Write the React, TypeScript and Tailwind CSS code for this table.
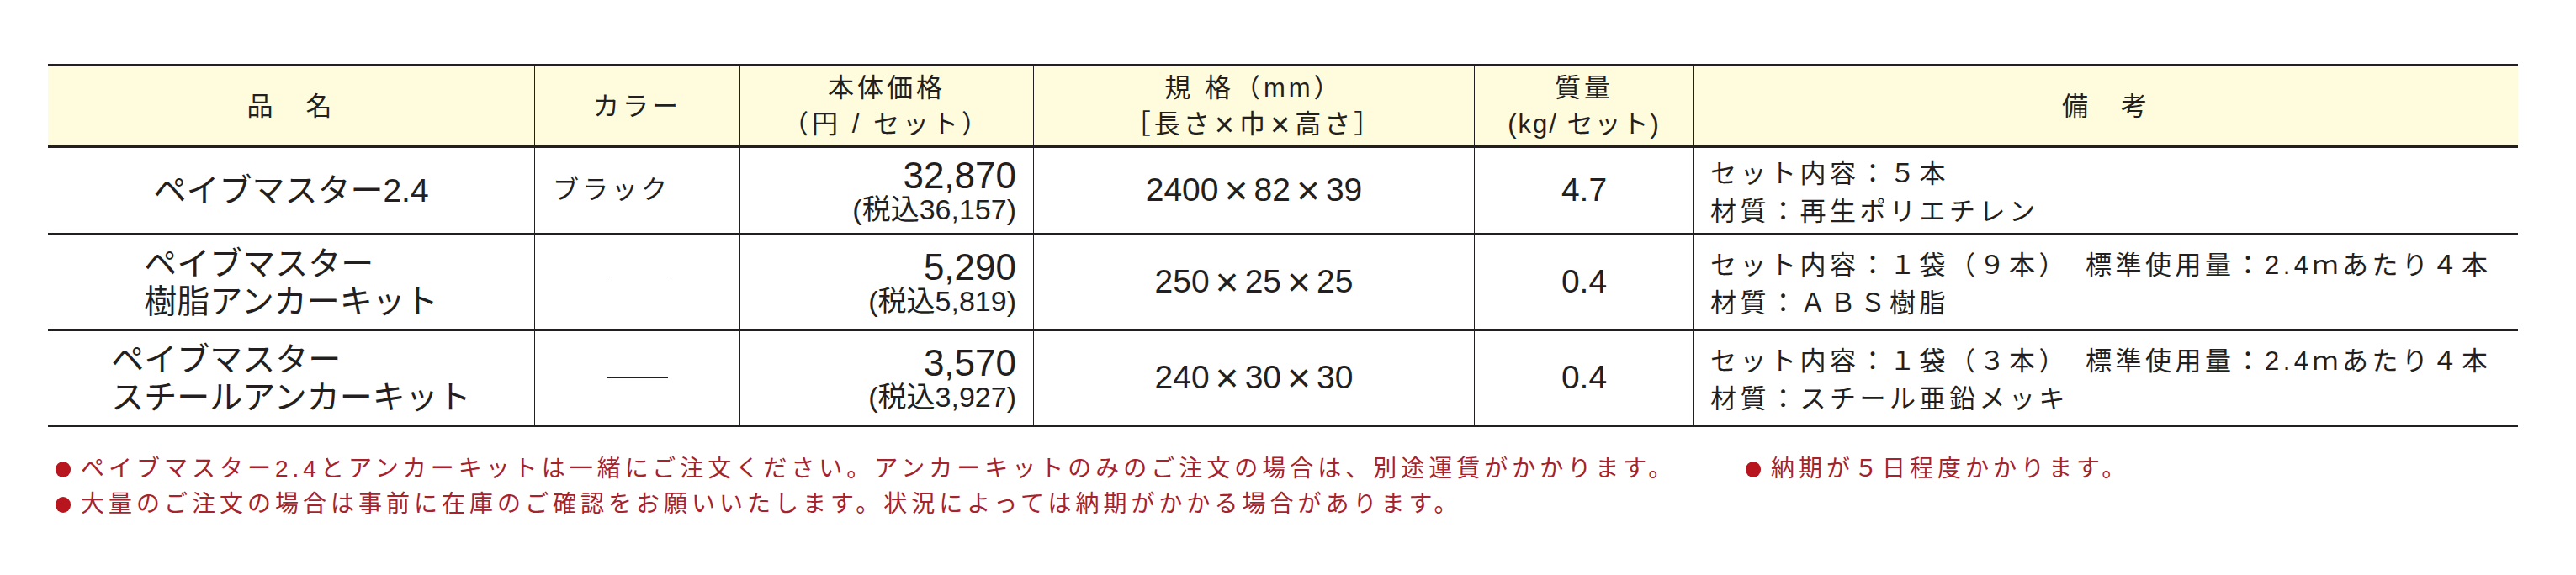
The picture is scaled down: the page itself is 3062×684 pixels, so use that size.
type Row = {
  name: string[];
  color: string | null;
  price: string;
  taxed: string;
  dims: string[];
  weight: string;
  notes: string[];
  height: string;
};

const rows: Row[] = [
  {
    name: ["ペイブマスター2.4"],
    color: "ブラック",
    price: "32,870",
    taxed: "(税込36,157)",
    dims: ["2400", "82", "39"],
    weight: "4.7",
    notes: ["セット内容：５本", "材質：再生ポリエチレン"],
    height: "h-[101px]",
  },
  {
    name: ["ペイブマスター", "樹脂アンカーキット"],
    color: null,
    price: "5,290",
    taxed: "(税込5,819)",
    dims: ["250", "25", "25"],
    weight: "0.4",
    notes: ["セット内容：１袋（９本）　標準使用量：2.4ｍあたり４本", "材質：ＡＢＳ樹脂"],
    height: "h-[111px]",
  },
  {
    name: ["ペイブマスター", "スチールアンカーキット"],
    color: null,
    price: "3,570",
    taxed: "(税込3,927)",
    dims: ["240", "30", "30"],
    weight: "0.4",
    notes: ["セット内容：１袋（３本）　標準使用量：2.4ｍあたり４本", "材質：スチール亜鉛メッキ"],
    height: "h-[111px]",
  },
];

const Bullet = () => (
  <span className="mr-[12px] inline-block h-[19px] w-[18px] shrink-0 rounded-full bg-[#b8161f]" />
);

const Dims = ({ parts }: { parts: string[] }) => (
  <span className="flex items-center">
    {parts.map((p, i) => (
      <span key={i} className="flex items-center">
        {i > 0 && <span className="mx-[7px] text-[48px] leading-none">×</span>}
        {p}
      </span>
    ))}
  </span>
);

const X = () => <span className="mx-[2px] text-[40px] leading-none">×</span>;

export default function App() {
  return (
    <div className="h-[684px] w-[3062px] bg-white pt-[76px] font-['Liberation_Sans','Noto_Sans_CJK_JP',sans-serif] text-[#231f20]">
      {/* table */}
      <div className="ml-[57px] w-[2936px] border-t-[3px] border-[#231f20]">
        {/* header */}
        <div className="flex h-[97px] border-b-[3px] border-[#231f20] bg-[#fefcdc] text-[31px] leading-[43px] tracking-[4px]">
          <div className="flex w-[579px] items-center justify-center border-r border-[#231f20]">品　名</div>
          <div className="flex w-[244px] items-center justify-center border-r border-[#231f20]">カラー</div>
          <div className="flex w-[349px] flex-col items-center justify-center border-r border-[#231f20]">
            <span>本体価格</span>
            <span>（円 / セット）</span>
          </div>
          <div className="flex w-[524px] flex-col items-center justify-center border-r border-[#231f20]">
            <span>規 格（mm）</span>
            <span className="flex items-center">
              ［長さ<X />巾<X />高さ］
            </span>
          </div>
          <div className="flex w-[261px] flex-col items-center justify-center border-r border-[#231f20]">
            <span>質量</span>
            <span className="tracking-[2px]">(kg/ セット)</span>
          </div>
          <div className="flex w-[979px] items-center justify-center">備　考</div>
        </div>

        {rows.map((r, i) => (
          <div key={i} className={`flex ${r.height} box-content border-b-[3px] border-[#231f20]`}>
            <div className="flex w-[579px] items-center justify-center border-r border-[#231f20] text-[39px] leading-[45px]">
              <div className="text-left">
                {r.name.map((n) => (
                  <div key={n}>{n}</div>
                ))}
              </div>
            </div>
            <div className="flex w-[244px] items-center border-r border-[#231f20]">
              {r.color ? (
                <span className="pl-[21px] text-[31px] tracking-[4px]">{r.color}</span>
              ) : (
                <div className="mx-auto h-px w-[73px] bg-[#231f20]" />
              )}
            </div>
            <div className="flex w-[349px] flex-col items-end justify-center border-r border-[#231f20] pr-[20px] pt-[4px]">
              <span className="text-[44px] leading-[41px]">{r.price}</span>
              <span className="text-[34px] leading-[41px]">{r.taxed}</span>
            </div>
            <div className="flex w-[524px] items-center justify-center border-r border-[#231f20] text-[39px]">
              <Dims parts={r.dims} />
            </div>
            <div className="flex w-[261px] items-center justify-center border-r border-[#231f20] text-[39px]">
              {r.weight}
            </div>
            <div className="flex w-[979px] flex-col justify-center whitespace-nowrap pl-[19px] pt-[4px] text-[31px] leading-[45px] tracking-[4.5px]">
              {r.notes.map((n) => (
                <div key={n}>{n}</div>
              ))}
            </div>
          </div>
        ))}
      </div>

      {/* notes */}
      <div className="mt-[29px] pl-[66px] text-[28px] leading-[42px] tracking-[5px] text-[#a5232c]">
        <div className="flex items-center whitespace-nowrap">
          <div className="flex w-[2009px] shrink-0 items-center">
            <Bullet />
            <span>ペイブマスター2.4とアンカーキットは一緒にご注文ください。アンカーキットのみのご注文の場合は、別途運賃がかかります。</span>
          </div>
          <div className="flex items-center">
            <Bullet />
            <span>納期が５日程度かかります。</span>
          </div>
        </div>
        <div className="flex items-center whitespace-nowrap">
          <Bullet />
          <span>大量のご注文の場合は事前に在庫のご確認をお願いいたします。状況によっては納期がかかる場合があります。</span>
        </div>
      </div>
    </div>
  );
}
